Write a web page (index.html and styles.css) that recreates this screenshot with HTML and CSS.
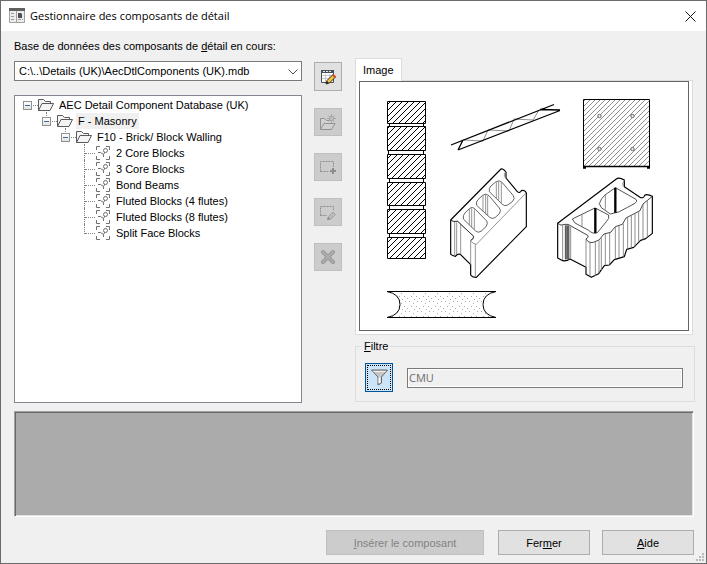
FILE: index.html
```html
<!DOCTYPE html>
<html lang="fr">
<head>
<meta charset="utf-8">
<title>Gestionnaire des composants de détail</title>
<link rel="stylesheet" href="styles.css">
</head>
<body>
<svg class="defs" aria-hidden="true">
  <defs>
    <symbol id="folder" viewBox="0 0 16 12">
      <path d="M.5 11.500V.5H5.500L7.500 2.500H12.500V4.500M.5 11.500L4 4.500H15.500L12 11.500Z" fill="#f4f4f4" stroke="#5a5a5a"/>
    </symbol>
    <symbol id="component" viewBox="0 0 14 14">
      <path d="M.5 4V.5H4M10 .5H13.500V4M.5 10V13.500H4M10 13.500H13.500V10M2 6.500H4.500L7.500 8.500V11M7.500 8.500L9 6" fill="none" stroke="#707070"/>
      <circle cx="9.500" cy="4.500" r="2" fill="#fff" stroke="#707070"/>
    </symbol>
  </defs>
</svg>
<div class="window">
  <header class="titlebar">
    <svg class="app-icon" width="16" height="16" viewBox="0 0 16 16" aria-hidden="true">
      <path d="M.5 1.500H15.500V14.500H.5Z" fill="#ececec" stroke="#a0a0a0"/>
      <path d="M0 0H16V3H0Z" fill="#606060"/>
      <path d="M7.500 3V15" stroke="#a0a0a0"/>
      <path d="M2 5.500H6M2 8.500H6M2 11.500H6M9 11.500H14" stroke="#999" stroke-dasharray="3 1"/>
      <path d="M9 5H12L13 6V10H9Z" fill="#505050"/>
    </svg>
    <h1>Gestionnaire des composants de détail</h1>
    <button class="close" type="button" aria-label="Fermer la fenêtre">
      <svg width="11" height="11" viewBox="0 0 11 11"><path d="M.5 .5L10.500 10.500M10.500 .5L.5 10.500" stroke="#111" fill="none"/></svg>
    </button>
  </header>
  <main>
    <div class="columns">
      <section class="source">
        <label for="database">Base de données des composants de <u>d</u>étail en cours:</label>
        <div class="combo">
          <select id="database"><option>C:\..\Details (UK)\AecDtlComponents (UK).mdb</option></select>
          <svg width="10" height="6" viewBox="0 0 10 6" aria-hidden="true"><path d="M.5 .5L5 5L9.500 .5" fill="none" stroke="#505050"/></svg>
        </div>
        <div class="tree">
          <ul>
            <li>
              <div class="node"><button class="toggle" type="button" aria-label="Réduire"></button><svg class="folder"><use href="#folder"/></svg><span>AEC Detail Component Database (UK)</span></div>
              <ul>
                <li>
                  <div class="node"><button class="toggle" type="button" aria-label="Réduire"></button><svg class="folder"><use href="#folder"/></svg><span class="selected">F - Masonry</span></div>
                  <ul>
                    <li>
                      <div class="node"><button class="toggle" type="button" aria-label="Réduire"></button><svg class="folder"><use href="#folder"/></svg><span>F10 - Brick/ Block Walling</span></div>
                      <ul>
                        <li><div class="node leaf"><svg class="component"><use href="#component"/></svg><span>2 Core Blocks</span></div></li>
                        <li><div class="node leaf"><svg class="component"><use href="#component"/></svg><span>3 Core Blocks</span></div></li>
                        <li><div class="node leaf"><svg class="component"><use href="#component"/></svg><span>Bond Beams</span></div></li>
                        <li><div class="node leaf"><svg class="component"><use href="#component"/></svg><span>Fluted Blocks (4 flutes)</span></div></li>
                        <li><div class="node leaf"><svg class="component"><use href="#component"/></svg><span>Fluted Blocks (8 flutes)</span></div></li>
                        <li><div class="node leaf"><svg class="component"><use href="#component"/></svg><span>Split Face Blocks</span></div></li>
                      </ul>
                    </li>
                  </ul>
                </li>
              </ul>
            </li>
          </ul>
        </div>
      </section>

      <div class="tools">
        <button class="edit" type="button" aria-label="Modifier la base de données">
          <svg width="16" height="16" viewBox="0 0 16 16">
            <path d="M1.500 1.500H13.500V13.500H1.500Z" fill="#fff" stroke="#4a5058"/>
            <path d="M1 1H14V4H1Z" fill="#4a5058"/><path d="M3 2.500H12" stroke="#dfe6ee" stroke-dasharray="2 1"/>
            <path d="M2 6.500H13M2 9.500H13M5.500 5V13M9.500 5V13" stroke="#c3c9d0"/>
            <path d="M6 15L7 11.500L13 5.500L15.500 8L9.500 14Z" fill="#f5c33b" stroke="#33302a"/>
            <path d="M12 6.500L13.500 5L16 7.500L14.500 9Z" fill="#d64a28"/><path d="M6 15L7 12L9 14Z" fill="#222"/>
          </svg>
        </button>
        <button type="button" disabled aria-label="Nouveau groupe">
          <svg width="16" height="16" viewBox="0 0 16 16">
            <path d="M.5 15.500V4.500H4.500L6.500 6.500H11.500V9.500M.5 15.500L4 9.500H15L11.500 15.500Z" fill="#d0d0d0" stroke="#929292"/>
            <path d="M11.500 0V9M7 4.500H16M8.500 1.500L14.500 7.500M14.500 1.500L8.500 7.500" stroke="#a8a8a8"/><circle cx="11.500" cy="4.500" r="2" fill="#c4c4c4" stroke="#a0a0a0"/>
          </svg>
        </button>
        <button type="button" disabled aria-label="Ajouter un composant">
          <svg width="16" height="16" viewBox="0 0 16 16">
            <path d="M.5 12.500V2.500H13.500V8M.5 12.500H9" fill="none" stroke="#8c8c8c" stroke-dasharray="2 1"/>
            <path d="M13 9V15M10 12H16" stroke="#8c8c8c" stroke-width="2"/>
          </svg>
        </button>
        <button type="button" disabled aria-label="Modifier le composant">
          <svg width="16" height="16" viewBox="0 0 16 16">
            <path d="M.5 11.500V2.500H13.500V6M.5 11.500H7" fill="none" stroke="#8c8c8c" stroke-dasharray="2 1"/>
            <path d="M8 15.500L8.500 12.500L13 8L15.500 10.500L11 15Z" fill="#bbb" stroke="#a0a0a0"/><path d="M7 16L8 13L10 15Z" fill="#888"/>
          </svg>
        </button>
        <button type="button" disabled aria-label="Supprimer">
          <svg width="16" height="16" viewBox="0 0 16 16">
            <path d="M3 3L13 13M13 3L3 13" stroke="#999" stroke-width="4" stroke-linecap="round"/><path d="M3 3L13 13M13 3L3 13" stroke="#adadad" stroke-width="2" stroke-linecap="round"/>
          </svg>
        </button>
      </div>

      <section class="details">
        <div class="tabs">
          <button class="tab" type="button">Image</button>
          <div class="pane">
            <div class="preview">
              <svg viewBox="360 82 328 248" role="img" aria-label="Aperçu des composants de maçonnerie">
                <defs>
                  <pattern id="hatch" width="6" height="6" patternUnits="userSpaceOnUse"><path d="M-1 7L7 -1M-1 1L1 -1M5 7L7 5" stroke="#000" stroke-width="1"/></pattern>
                  <pattern id="gray-hatch" width="5" height="5" patternUnits="userSpaceOnUse"><path d="M-1 6L6 -1M-1 1L1 -1M4 6L6 4" stroke="#8e8e8e" stroke-width="1"/></pattern>
                  <pattern id="dots" width="12" height="10" patternUnits="userSpaceOnUse"><path d="M1 1h1v1h-1zM5 3h1v1h-1zM9 1h1v1h-1zM3 6h1v1h-1zM8 6h1v1h-1zM11 8h1v1h-1zM6 9h1v1h-1z" fill="#aaa"/></pattern>
                </defs>
                <g fill="url(#hatch)" stroke="#000">
                  <path d="M387.500 101.500H425.500V123.500H387.500ZM387.500 126.500H425.500V150.500H387.500ZM387.500 154.500H425.500V178.500H387.500ZM387.500 182.500H425.500V205.500H387.500ZM387.500 209.500H425.500V233.500H387.500ZM387.500 237.500H425.500V258.500H387.500Z"/>
                </g>
                <path d="M389.500 123V127M423.500 123V127M388.500 150V155M423.500 150V155M389.500 178V183M423.500 178V183M389.500 205V210M423.500 205V210M389.500 233V238M423.500 233V238" stroke="#000"/>
                <g fill="none">
                  <path d="M463 140L483 141L488 130L509 131L514 119L533 120L539 110" stroke="#909090"/>
                  <path d="M451 145L554 104.500M458 150L560 110.500M458 150L463 140M540 109.500L560 110" stroke="#000" stroke-width="1.300"/>
                </g>
                <path d="M583.500 99.500H649.500V166.500H583.500Z" fill="url(#gray-hatch)" stroke="#000"/>
                <path d="M583 166.500H650M583 168H586M647 168H650" stroke="#000" stroke-width="1.500"/>
                <g fill="#eee" stroke="#666"><circle cx="599.500" cy="116" r="1.700"/><circle cx="632.500" cy="116" r="1.700"/><circle cx="599.500" cy="149" r="1.700"/><circle cx="632.500" cy="149" r="1.700"/></g>

                <g transform="translate(375 150) scale(.33333)" fill="none" stroke="#808080" stroke-width="2.500" stroke-linejoin="round">
                  <path d="M227 210L375 60Q381 51 393 66V84L427 125Q434 131 439 122Q449 118 454 128V230L304 382Q292 383 287 375V344L256 313Q248 310 241 319Q230 317 227 312Z" fill="#fff" stroke="#000" stroke-width="3.500"/>
                  <path d="M227 210Q235 217 248 214L296 259Q297 267 287 271Q292 282 304 283L454 128M239 216V317M245 217V312M257 223V313M287 273V344M301 283V382M393 66Q385 68 390 82"/>
                  <path d="M227 210Q235 217 248 214L296 259Q297 267 287 271" stroke="#222"/>
                  <path d="M265 207Q263 195 270 189L283 176Q293 168 302 179L335 213Q340 220 333 230L318 244Q309 250 302 243ZM305 166Q302 155 309 149L323 136Q333 128 342 137L373 174Q380 181 373 191L360 203Q351 209 343 201ZM343 125Q341 114 348 108L362 96Q373 88 382 98L415 137Q421 145 413 154L398 165Q389 170 382 163Z" stroke="#444"/>
                  <path d="M283 177V226M290 175V232M298 178V239M324 137V184M332 134V193M338 138V198M364 97V145M371 95V152M379 98V160"/>
                </g>

                <g transform="translate(545 165) scale(.33333)" fill="none" stroke="#777" stroke-width="2.500" stroke-linejoin="round">
                  <path d="M38 175L214 42Q222 36 238 45V65L285 97Q296 101 299 91Q306 86 322 94V205L302 221L287 226L266 247L245 253L238 275L208 284L193 300L178 302L161 326L139 337L123 328V307L75 282Q65 289 53 287L38 279Z" fill="#fff" stroke="#000" stroke-width="3.500"/>
                  <path d="M38 175Q47 184 60 178Q70 176 78 183L128 211Q134 216 123 222Q130 235 145 232L162 225L177 207L197 202L211 185L232 178L243 159L266 147L285 137L294 117L322 94" stroke="#222"/>
                  <path d="M82 162L150 129L191 150Q194 161 184 170L157 203Q145 209 131 196L90 174ZM163 116Q168 100 180 90L211 68L273 103Q279 108 270 115Q248 127 221 141L196 147L169 128Z" stroke="#333"/>
                  <path d="M111 149V187M181 90V134M53 181V285M77 185V282M123 222V328M135 233V334M151 231V333M162 226V325M169 219V315M181 207V302M194 204V299M211 186V283M222 182V278M235 176V275M248 157V253M259 151V250M270 146V246M281 139V230M294 118V224M307 106V216M238 47Q230 54 235 64"/>
                  <path d="M151 129V204M211 68V143" stroke="#000" stroke-width="7"/>
                  <path d="M67 181V283" stroke="#777" stroke-width="13"/>
                  <path d="M61 181V283M69 181V283" stroke="#333" stroke-width="2"/>
                </g>
                <path d="M387 291.500Q400 295 400 304.500Q400 314 387 317.500H496Q483 314 483 304.500Q483 295 496 291.500Z" fill="url(#dots)" stroke="none"/>
                <path d="M387 291.500H496M387 317.500H496M387 291.500Q400 294 400 304.500Q400 315 387 317.500M496 291.500Q483 294 483 304.500Q483 315 496 317.500" fill="none" stroke="#000"/>
              </svg>
            </div>
          </div>
        </div>
        <fieldset>
          <legend><label for="filter"><u>F</u>iltre</label></legend>
          <button class="filter" type="button" aria-label="Filtre">
            <svg width="17" height="17" viewBox="0 0 17 17"><path d="M.5 1H16.500L10.500 8V14L7 16V8Z" fill="#c6c6c6" stroke="#666"/><path d="M2.500 2.500H14.500" stroke="#f4f4f4"/><path d="M8.500 8.500V14" stroke="#fff" stroke-width="2"/></svg>
          </button>
          <input id="filter" type="text" value="CMU" disabled>
        </fieldset>
      </section>
    </div>
    <div class="properties"></div>
    <footer>
      <button class="insert" type="button" disabled><u>I</u>nsérer le composant</button>
      <button type="button">Fer<u>m</u>er</button>
      <button type="button"><u>A</u>ide</button>
    </footer>
  </main>
  <svg class="grip" width="9" height="9" viewBox="0 0 9 9" aria-hidden="true"><path d="M6 0h2v2h-2zM3 3h2v2h-2zM6 3h2v2h-2zM0 6h2v2h-2zM3 6h2v2h-2zM6 6h2v2h-2z" fill="#bababa"/></svg>
</div>
</body>
</html>
```

FILE: styles.css
```css
* { box-sizing: border-box; }

body {
  margin: 0;
  font: 11px/16px "Liberation Sans", Arial, sans-serif;
  color: #000;
}

button, select, input { font: inherit; color: inherit; margin: 0; }
ul { list-style: none; margin: 0; padding: 0; }
svg { display: block; flex: none; }
u { text-underline-offset: 1px; }
.defs { position: absolute; width: 0; height: 0; }

.window {
  position: relative;
  display: flex;
  flex-direction: column;
  min-height: 100vh;
  border: 1px solid #6b6b6b;
  background: #f0f0f0;
}

.titlebar {
  display: flex;
  align-items: center;
  gap: 5px;
  height: 30px;
  padding: 0 8px;
  background: #fff;
}
.titlebar h1 {
  flex: 1;
  margin: 0;
  font: 11px/16px "Open Sans", "Noto Sans", sans-serif;
}
.close {
  padding: 2px;
  border: 0;
  background: none;
}

main {
  flex: 1;
  display: flex;
  flex-direction: column;
  padding: 7px 12px 8px 13px;
}

.columns {
  flex: 1;
  display: grid;
  grid-template-columns: minmax(0, 288fr) 28px minmax(0, 340fr);
  column-gap: 12px;
}

.source { display: flex; flex-direction: column; }
.combo { position: relative; margin: 7px 0 14px; }
.combo select {
  display: block;
  width: 100%;
  height: 20px;
  padding: 0 20px 0 4px;
  border: 1px solid #7a7a7a;
  border-radius: 0;
  background: #fff;
  appearance: none;
}
.combo svg {
  position: absolute;
  right: 4px;
  top: 8px;
  pointer-events: none;
}

.tree {
  flex: 1;
  padding: 1px 8px;
  border: 1px solid #828790;
  background: #fff;
}
.tree ul ul { padding-left: 19px; }
.tree li { position: relative; }
.tree ul ul > li::before {
  content: "";
  position: absolute;
  left: 4px;
  top: -1px;
  height: 100%;
  border-left: 1px dotted #808080;
}
.tree ul ul > li:last-child::before { height: 10px; }
.node {
  position: relative;
  display: flex;
  align-items: center;
  height: 16px;
}
.node::before {
  content: "";
  position: absolute;
  left: 5px;
  top: 8px;
  width: 10px;
  border-top: 1px dotted #808080;
}
.node span { padding: 0 2px; white-space: nowrap; }
.node .selected { background: #f0f0f0; }
.leaf { padding-left: 16px; }
.folder { width: 16px; height: 12px; margin-right: 3px; }
.component { width: 14px; height: 14px; margin-right: 4px; }
.toggle {
  position: relative;
  width: 9px;
  height: 9px;
  margin-right: 6px;
  padding: 0;
  border: 1px solid #919191;
  background: linear-gradient(#4b63a7, #4b63a7) center / 5px 1px no-repeat, linear-gradient(#fff, #e2e2e2);
}

.tools {
  display: flex;
  flex-direction: column;
  gap: 17px;
  padding-top: 24px;
}
.tools button {
  display: grid;
  place-items: center;
  width: 28px;
  height: 28px;
  padding: 0;
  border: 1px solid #bfbfbf;
  background: #ccc;
}
.tools .edit { height: 29px; border-color: #adadad; background: #e1e1e1; }

.details {
  display: flex;
  flex-direction: column;
  margin: 0 -1px 0 1px;
  padding-top: 20px;
}
.tab {
  position: relative;
  display: block;
  height: 23px;
  padding: 0 7px;
  margin-bottom: -1px;
  border: 1px solid #dcdcdc;
  border-bottom: 0;
  background: #fff;
}
.pane {
  margin-right: 2px;
  padding: 0 3px 3px;
  border: 1px solid #dcdcdc;
  background: #fff;
}
.preview { border: 1px solid #646464; }
.preview svg { width: 100%; }

fieldset {
  display: flex;
  gap: 14px;
  align-items: center;
  margin: 3px 0 0;
  padding: 9px 11px 9px 9px;
  border: 1px solid #dcdcdc;
}
legend { padding: 0 2px; margin-left: -3px; }
.filter {
  display: grid;
  place-items: center;
  width: 28px;
  height: 29px;
  padding: 0;
  border: 1px solid #00549a;
  outline: 1px dotted #000;
  outline-offset: -3px;
  background: #cce4f7;
}
fieldset input {
  flex: 1;
  min-width: 0;
  height: 20px;
  padding: 0 1px;
  border: 1px solid #7a7a7a;
  box-shadow: inset 0 0 0 1px #fff;
  background: #f0f0f0;
  color: #6d6d6d;
  font: 11px/16px "Open Sans", "Noto Sans", sans-serif;
}

.properties {
  height: 106px;
  margin-top: 8px;
  border: 1px solid;
  border-color: #a0a0a0 #fff #fff #a0a0a0;
  background: #ababab;
  box-shadow: inset 1px 1px #696969, inset -1px -1px #e3e3e3;
}

footer {
  display: flex;
  justify-content: flex-end;
  gap: 12px;
  margin-top: 13px;
}
footer button {
  width: 92px;
  height: 25px;
  padding: 0;
  border: 1px solid #adadad;
  background: #e1e1e1;
}
footer .insert {
  width: 158px;
  margin-right: 2px;
  border-color: #bfbfbf;
  background: #ccc;
  color: #838383;
}

.grip { position: absolute; right: 1px; bottom: 1px; }
```
